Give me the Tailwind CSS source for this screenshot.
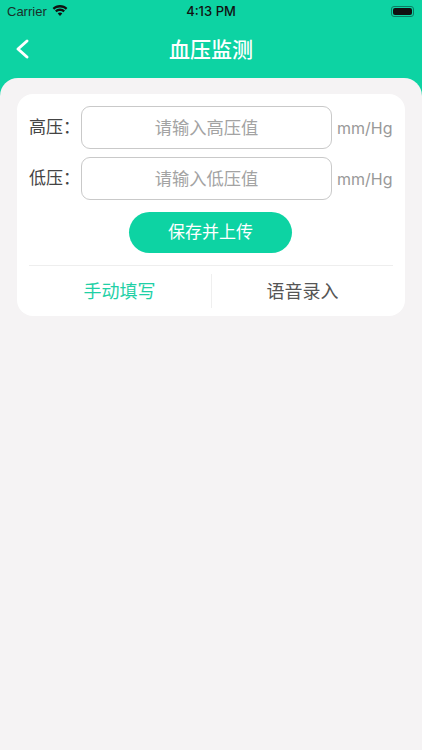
<!DOCTYPE html>
<html lang="zh">
<head>
  <meta charset="UTF-8" />
  <meta name="viewport" content="width=device-width, initial-scale=1.0" />
  <title>血压监测</title>
  <script src="https://cdn.jsdelivr.net/npm/@tailwindcss/browser@4"></script>
</head>
<body class="w-[422px] h-[750px] overflow-hidden bg-[#0dd3a3] font-['Inter','Noto_Sans_CJK_SC',sans-serif]">
  <!-- status bar -->
  <div class="h-[22px] pt-[1px] pl-[7px] pr-[7px] flex items-center justify-between text-[#111] text-[13px]">
    <div class="flex items-center gap-[5px] w-[120px]">
      <span class="font-['Liberation_Sans','Noto_Sans_CJK_SC',sans-serif] text-[13px] text-[#1a2f2a]">Carrier</span>
      <svg class="mb-[2px]" width="16" height="12" viewBox="0 0 16 12" fill="#111">
        <path d="M8 2.500c2.300 0 4.300.9 5.800 2.300L15.400 3.100C13.500 1.200 10.900 0 8 0S2.500 1.200.6 3.100l1.600 1.700C3.700 3.400 5.700 2.500 8 2.500z"/>
        <path d="M8 6c1.300 0 2.500.5 3.400 1.300l1.600-1.700C11.700 4.400 9.900 3.600 8 3.600s-3.700.8-5 2l1.600 1.700C5.500 6.500 6.700 6 8 6z"/>
        <path d="M8 7.500c-.9 0-1.700.3-2.300.9L8 11l2.300-2.600c-.6-.6-1.400-.9-2.300-.9z"/>
      </svg>
    </div>
    <span class="font-medium text-[13px]">4:13 PM</span>
    <div class="w-[120px] flex justify-end">
      <div class="w-[23px] h-[11px] rounded-[3px] border border-[#0a7d63] p-[1px] mr-[1px]">
        <div class="w-full h-full rounded-[2px] bg-[#111]"></div>
      </div>
    </div>
  </div>
  <!-- nav bar -->
  <div class="relative h-[56px] flex items-center justify-center">
    <svg class="absolute left-[14px] top-[16px]" width="16" height="22" viewBox="0 0 16 22" fill="none" stroke="#fff" stroke-width="3" stroke-linecap="round" stroke-linejoin="round">
      <path d="M13 3 4 11l9 8"/>
    </svg>
    <h1 class="text-white text-[21px] font-medium">血压监测</h1>
  </div>
  <!-- page -->
  <div class="h-[672px] bg-[#f5f3f4] rounded-t-[18px] px-[17px] pt-[16px]">
    <div class="bg-white rounded-[16px] px-[12px] pt-[12px]">
      <div class="flex items-center h-[43px]">
        <span class="w-[52px] pt-[1px] text-[17px] text-[#444]">高压：</span>
        <div class="w-[251px] h-[43px] pb-[1px] rounded-[9px] border border-[#c9c9c9] flex items-center justify-center text-[17.3px] text-[#a3a3a3]">
          <span class="pt-[1px]">请输入高压值</span>
        </div>
        <span class="ml-[5px] text-[16px] text-[#999]">mm/Hg</span>
      </div>
      <div class="flex items-center h-[43px] mt-[8px]">
        <span class="w-[52px] pt-[1px] text-[17px] text-[#444]">低压：</span>
        <div class="w-[251px] h-[43px] pb-[1px] rounded-[9px] border border-[#c9c9c9] flex items-center justify-center text-[17.3px] text-[#a3a3a3]">
          <span class="pt-[1px]">请输入低压值</span>
        </div>
        <span class="ml-[5px] text-[16px] text-[#999]">mm/Hg</span>
      </div>
      <div class="flex justify-center mt-[12px] pr-[1px]">
        <button class="w-[163px] h-[41px] pt-[1px] rounded-full bg-[#0dd3a3] text-white text-[17px]">保存并上传</button>
      </div>
      <div class="mt-[12px] border-t border-[#eeeeee] flex h-[51px]">
        <div class="w-[182px] flex items-center justify-center pt-[1px] pr-[1px] text-[18px] text-[#1fd0a6]">手动填写</div>
        <div class="w-[1px] h-[34px] mt-[8px] bg-[#efefef]"></div>
        <div class="flex-1 flex items-center justify-center pt-[1px] text-[18px] text-[#555]">语音录入</div>
      </div>
    </div>
  </div>
</body>
</html>
